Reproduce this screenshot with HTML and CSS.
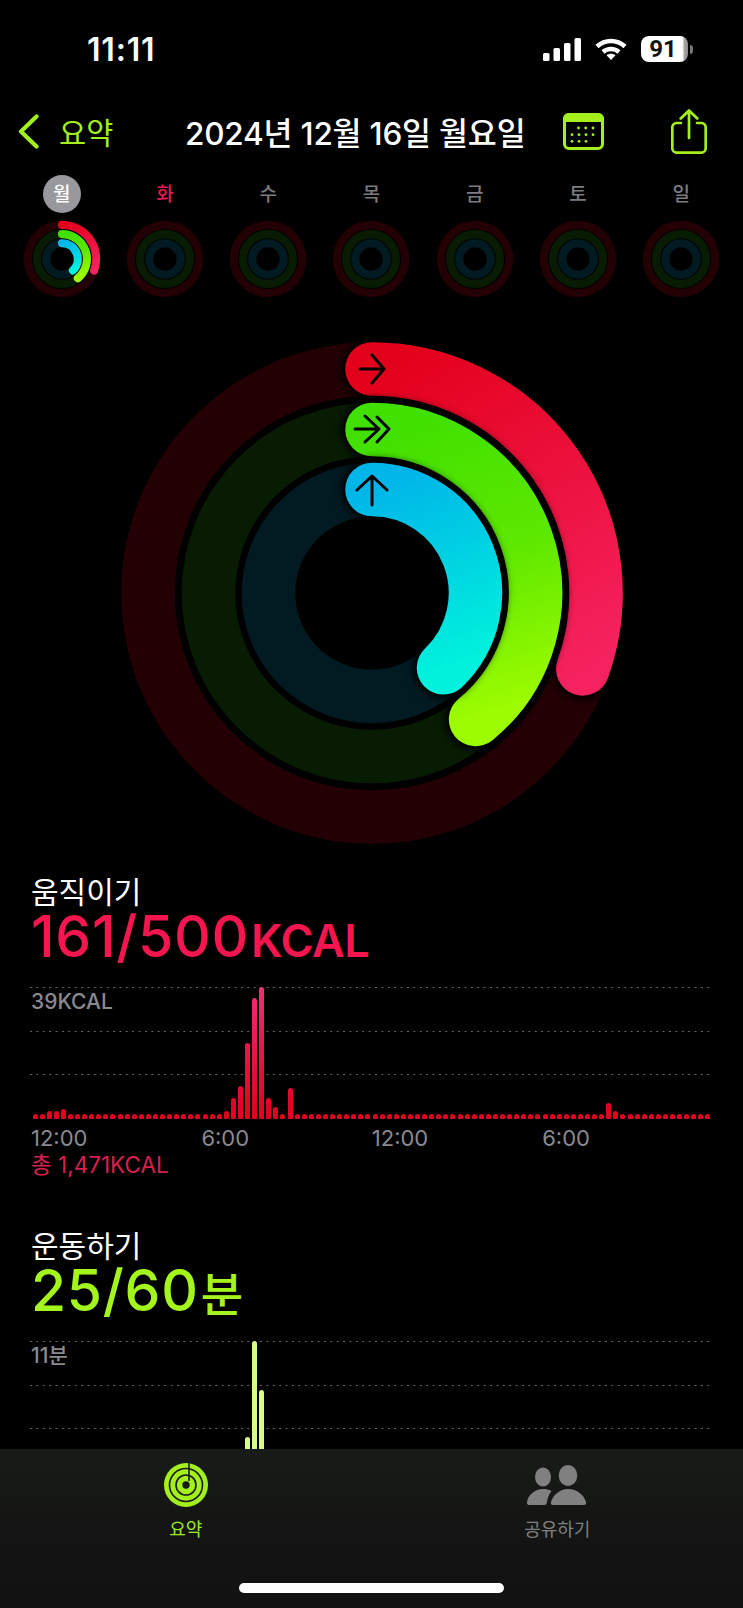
FILE: index.html
```html
<!DOCTYPE html>
<html lang="ko">
<head>
<meta charset="utf-8">
<title>활동 요약</title>
<link rel="stylesheet" href="styles.css">
</head>
<body>
<svg class="defs" width="0" height="0" aria-hidden="true">
  <defs>
    <linearGradient id="gr" gradientUnits="userSpaceOnUse" x1="0" y1="-224" x2="190" y2="90"><stop offset="0" stop-color="#e3001a"/><stop offset="1" stop-color="#f5225f"/></linearGradient>
    <linearGradient id="gg" gradientUnits="userSpaceOnUse" x1="0" y1="-164" x2="90" y2="130"><stop offset="0" stop-color="#40e000"/><stop offset="0.5" stop-color="#5ee800"/><stop offset="1" stop-color="#9dfc00"/></linearGradient>
    <linearGradient id="gc" gradientUnits="userSpaceOnUse" x1="0" y1="-104" x2="70" y2="80"><stop offset="0" stop-color="#00b6e8"/><stop offset="1" stop-color="#00f2dc"/></linearGradient>
    <g id="tracks">
      <circle class="track track-r" r="224"/>
      <circle class="track track-g" r="163.5"/>
      <circle class="track track-c" r="103.5"/>
    </g>
    <g id="arcs">
      <path class="arc-shadow" d="M0 -224A224 224 0 0 1 210.8 75.9"/>
      <path class="arc arc-r" d="M0 -224A224 224 0 0 1 210.8 75.9"/>
      <path class="arc-shadow" d="M0 -163.5A163.5 163.5 0 0 1 103.6 126.5"/>
      <path class="arc arc-g" d="M0 -163.5A163.5 163.5 0 0 1 103.6 126.5"/>
      <path class="arc-shadow" d="M0 -103.5A103.5 103.5 0 0 1 71.5 74.8"/>
      <path class="arc arc-c" d="M0 -103.5A103.5 103.5 0 0 1 71.5 74.8"/>
    </g>
  </defs>
</svg>
<div class="phone">
  <header class="status">
    <span class="time">11:11</span>
    <div class="status-icons">
      <svg class="signal" viewBox="0 0 38 23"><rect x="0" y="15" width="6.5" height="8" rx="1.5"/><rect x="10.5" y="10" width="6.5" height="13" rx="1.5"/><rect x="21" y="5" width="6.5" height="18" rx="1.5"/><rect x="31.5" y="0" width="6.5" height="23" rx="1.5"/></svg>
      <svg class="wifi" viewBox="0 0 32 22"><path d="M2 8.5C10 1 22 1 30 8.5" /><path d="M8 14C12.500 10 19.500 10 24 14"/><path class="wifi-dot" d="M16 22L11.500 17.300C14 15.300 18 15.300 20.500 17.300Z"/></svg>
      <div class="battery"><span>91</span></div>
      <div class="battery-nub"></div>
    </div>
  </header>

  <nav class="nav">
    <div class="back">
      <svg class="chevron" viewBox="0 0 21 35"><path d="M18.500 2.500L3 17.500L18.500 32.500"/></svg>
      <span>요약</span>
    </div>
    <h1 class="nav-title">2024년 12월 16일 월요일</h1>
    <svg class="calendar" viewBox="0 0 41 37">
      <rect class="cal-frame" x="1.500" y="1.500" width="38" height="34" rx="4.500"/>
      <path class="cal-band" d="M6 0H35A6 6 0 0 1 41 6V9H0V6A6 6 0 0 1 6 0Z"/>
      <g class="cal-dots">
        <circle cx="15.500" cy="15" r="1.400"/><circle cx="22.700" cy="15" r="1.400"/><circle cx="30" cy="15" r="1.400"/>
        <circle cx="9" cy="21.700" r="1.400"/><circle cx="16" cy="21.700" r="1.400"/><circle cx="23" cy="21.700" r="1.400"/><circle cx="30" cy="21.700" r="1.400"/>
        <circle cx="9" cy="28.300" r="1.400"/><circle cx="16" cy="28.300" r="1.400"/><circle cx="23" cy="28.300" r="1.400"/>
      </g>
    </svg>
    <svg class="share" viewBox="0 0 36 45">
      <path d="M10 14H5.500A4.500 4.500 0 0 0 1.300 18.500V39A4.500 4.500 0 0 0 5.500 43.700H30.500A4.500 4.500 0 0 0 34.700 39V18.500A4.500 4.500 0 0 0 30.500 14H26"/>
      <path d="M18 29V1.800M9.700 9.500L18 1.500L26.300 9.500"/>
    </svg>
  </nav>

  <div class="week">
    <span class="day day-today">월</span>
    <span class="day day-red">화</span>
    <span class="day">수</span>
    <span class="day">목</span>
    <span class="day">금</span>
    <span class="day">토</span>
    <span class="day">일</span>
    <svg class="mini" viewBox="-256 -256 512 512"><use href="#tracks"/><use href="#arcs"/></svg>
    <svg class="mini" viewBox="-256 -256 512 512"><use href="#tracks"/></svg>
    <svg class="mini" viewBox="-256 -256 512 512"><use href="#tracks"/></svg>
    <svg class="mini" viewBox="-256 -256 512 512"><use href="#tracks"/></svg>
    <svg class="mini" viewBox="-256 -256 512 512"><use href="#tracks"/></svg>
    <svg class="mini" viewBox="-256 -256 512 512"><use href="#tracks"/></svg>
    <svg class="mini" viewBox="-256 -256 512 512"><use href="#tracks"/></svg>
  </div>

  <svg class="big-ring" viewBox="-256 -256 512 512">
    <use href="#tracks"/>
    <use href="#arcs"/>
    <g class="glyph">
      <path d="M-12 -224H12M0 -238L12 -224L0 -210"/>
      <path d="M-17 -164H3M-7 -177L7 -164L-7 -151M5 -176L17 -164L5 -151"/>
      <path d="M0 -88V-117M-15 -103L0 -117L15 -103"/>
    </g>
  </svg>

  <section class="metric metric-move">
    <h2 class="metric-title">움직이기</h2>
    <p class="metric-value">161/500<span class="unit">KCAL</span></p>
    <div class="chart">
      <div class="grid-lines"><i></i><i></i><i></i></div>
      <span class="chart-max">39KCAL</span>
      <div class="bars bars-move">
        <b></b><b></b><b style="height:8px"></b><b style="height:8px"></b><b style="height:10px"></b>
        <b></b><b></b><b></b><b></b><b></b><b></b><b></b><b></b><b></b><b></b><b></b><b></b><b></b><b></b><b></b><b></b><b></b><b></b><b></b><b></b><b></b><b></b>
        <b style="height:8px"></b><b style="height:21px"></b><b style="height:33px"></b><b style="height:76px"></b><b style="height:121px"></b><b style="height:132px"></b><b style="height:21px"></b><b style="height:12px"></b>
        <b></b><b style="height:31px"></b>
        <b></b><b></b><b></b><b></b><b></b><b></b><b></b><b></b><b></b><b></b><b></b><b></b><b></b><b></b><b></b><b></b><b></b><b></b><b></b><b></b><b></b><b></b><b></b><b></b><b></b><b></b><b></b><b></b><b></b><b></b><b></b><b></b><b></b><b></b><b></b><b></b><b></b><b></b><b></b><b></b><b></b><b></b><b></b><b></b>
        <b style="height:16px"></b><b style="height:8px"></b>
        <b></b><b></b><b></b><b></b><b></b><b></b><b></b><b></b><b></b><b></b><b></b><b></b><b></b>
      </div>
    </div>
    <div class="axis"><span>12:00</span><span>6:00</span><span>12:00</span><span>6:00</span></div>
    <p class="total">총 1,471KCAL</p>
  </section>

  <section class="metric metric-exercise">
    <h2 class="metric-title">운동하기</h2>
    <p class="metric-value">25/60<span class="unit unit-ko">분</span></p>
    <div class="chart">
      <div class="grid-lines"><i></i><i></i><i></i></div>
      <span class="chart-max">11분</span>
      <div class="bars bars-exercise">
        <b style="grid-column:31;height:36px"></b><b style="grid-column:32;height:132px"></b><b style="grid-column:33;height:83px"></b>
      </div>
    </div>
  </section>

  <footer class="tabbar">
    <div class="tab tab-active">
      <svg class="tab-rings" viewBox="-22 -22 44 44">
        <circle class="tr-fill" r="22"/>
        <circle class="tr-line" r="16.500"/>
        <circle class="tr-line" r="10"/>
        <circle class="tr-dot" r="3.700"/>
        <path class="tr-line" d="M3 -22V-4"/>
      </svg>
      <span>요약</span>
    </div>
    <div class="tab">
      <svg class="tab-people" viewBox="0 0 60 40">
        <ellipse cx="16" cy="12" rx="8" ry="9.500"/>
        <ellipse cx="41" cy="10.500" rx="9.300" ry="10.500"/>
        <path d="M0 37C1 30 8 24 16 24C19 24 22 24.500 24.500 26C22 29 20.500 33 20 37C19.700 39 19 40 17.500 40H2.500C0.500 40 -0.300 38.500 0 37Z"/>
        <path d="M26 40C24 40 23.500 38.500 24 37C26 30 33 24 41 24C50 24 57 30 59 37C59.500 38.500 59 40 57 40Z"/>
      </svg>
      <span>공유하기</span>
    </div>
    <div class="home-indicator"></div>
  </footer>
</div>
</body>
</html>
```

FILE: styles.css
```css
* { box-sizing: border-box; }

html, body {
  margin: 0;
  padding: 0;
  background: #000;
}

.defs { display: block; height: 0; }

.phone {
  position: relative;
  width: 743px;
  height: 1608px;
  overflow: hidden;
  background: #000;
  color: #fff;
  font-family: Inter, "Noto Sans CJK KR", sans-serif;
}

/* status bar */
.status {
  display: flex;
  align-items: center;
  height: 26px;
  margin-top: 36px;
  padding-left: 87px;
}
.time { font-size: 32px; font-weight: 600; letter-spacing: 0.800px; width: 456px; }
.status-icons { display: flex; align-items: center; }
.signal { width: 38px; height: 23px; fill: #fff; margin-right: 14px; }
.wifi { width: 32px; height: 22px; fill: none; stroke: #fff; stroke-width: 4.500; margin-right: 14px; }
.wifi-dot { fill: #fff; stroke: none; }
.battery {
  display: flex;
  align-items: center;
  justify-content: center;
  width: 47px;
  height: 26px;
  padding-right: 3px;
  border-radius: 8px;
  background: linear-gradient(90deg, #fff 88%, #a8a8a8 92%, #8a8a8a 100%);
  color: #111;
  font-family: Roboto, sans-serif;
  font-size: 24px;
  font-weight: 700;
}
.battery-nub { width: 3px; height: 9px; margin-left: 2px; border-radius: 0 3px 3px 0; background: #777; }

/* nav */
.nav {
  display: grid;
  grid-template-columns: 185px 378px 108px 36px;
  align-items: center;
  height: 45px;
  margin-top: 46px;
}
.back { display: flex; align-items: center; padding-left: 18px; gap: 20px; color: #a3f01c; font-size: 29.500px; }
.back span { padding-bottom: 2px; }
.chevron { width: 21px; height: 35px; fill: none; stroke: #a3f01c; stroke-width: 4.200; stroke-linecap: round; stroke-linejoin: round; }
.nav-title { margin: 0; padding-bottom: 1px; font-size: 31.500px; font-weight: 500; letter-spacing: -0.200px; white-space: nowrap; }
.calendar { width: 41px; height: 37px; }
.cal-frame { fill: none; stroke: #a3f01c; stroke-width: 3; }
.cal-band { fill: #a3f01c; }
.cal-dots { fill: #a3f01c; }
.share { width: 36px; height: 45px; fill: none; stroke: #a3f01c; stroke-width: 2.700; stroke-linecap: round; stroke-linejoin: round; }

/* week strip */
.week {
  display: grid;
  grid-template-columns: repeat(7, 1fr);
  justify-items: center;
  align-items: center;
  row-gap: 7px;
  margin-top: 22px;
  padding: 0 10px;
}
.day { display: flex; align-items: center; justify-content: center; width: 38px; height: 38px; padding-bottom: 3px; border-radius: 50%; color: #7c7c80; font-size: 19px; font-weight: 500; }
.day-today { background: #98989d; color: #fff; }
.day-red { color: #e21a4d; }
.mini { width: 78px; height: 78px; }
.mini .track { stroke-width: 56px; }
.mini .track-r { stroke: #2f0008; }
.mini .track-g { stroke: #0c2a06; }
.mini .track-c { stroke: #05293a; }

/* rings */
.track { fill: none; stroke-width: 53.500px; }
.track-r { stroke: #230004; }
.track-g { stroke: #081c03; }
.track-c { stroke: #021b23; }
.arc { fill: none; stroke-width: 53.500px; stroke-linecap: round; }
.arc-shadow { fill: none; stroke: #000; stroke-width: 60px; stroke-linecap: round; filter: blur(4px); }
.arc-r { stroke: url(#gr); }
.arc-g { stroke: url(#gg); }
.arc-c { stroke: url(#gc); }
.big-ring { display: block; width: 512px; height: 512px; margin: 39px auto 0; }
.glyph { fill: none; stroke: #000; stroke-width: 3; stroke-linecap: round; stroke-linejoin: round; }

/* metric sections */
.metric { padding: 0 32px 0 30px; }
.metric-move { margin-top: 25px; }
.metric-exercise { margin-top: 49px; }
.metric-title { margin: 0; padding: 2px 0 0 1px; height: 32px; font-size: 30px; font-weight: 400; line-height: 32px; }
.metric-value { margin: 0; padding: 2px 0 0 1px; height: 60px; font-size: 57px; font-weight: 500; line-height: 58px; letter-spacing: 0.700px; white-space: nowrap; }
.unit { margin-left: 2px; font-size: 45px; font-weight: 600; letter-spacing: -0.500px; }
.unit-ko { font-size: 46px; font-weight: 500; }
.metric-move .metric-value { color: #f5154f; }
.metric-exercise .metric-value { color: #a3f51c; }

.chart { display: grid; height: 132px; margin-top: 21px; }
.chart > * { grid-area: 1 / 1; }
.grid-lines { display: flex; flex-direction: column; justify-content: space-between; height: 88px; }
.grid-lines i {
  display: block;
  height: 1px;
  background: linear-gradient(90deg, #6a6a6a 2px, transparent 2px) 0 0 / 6.400px 1px repeat-x;
}
.chart-max { align-self: start; margin-top: 3px; padding-left: 1px; color: #8a8a8e; font-size: 21px; font-weight: 500; line-height: 24px; }
.bars { display: grid; grid-template-columns: repeat(96, 1fr); align-items: end; justify-items: center; width: 680px; margin-left: 1.500px; }
.bars b { display: block; width: 5px; height: 5px; border-radius: 2.500px 2.500px 1px 1px; }
.bars-move b {
  background: linear-gradient(0deg, #e2001d 0%, #e6103c 40%, #ee2f7a 100%) bottom / 100% 132px no-repeat;
}
.bars-exercise b { background: #d8fb8e; grid-row: 1; }

.axis { display: grid; grid-template-columns: repeat(4, 170.400px); margin-top: 7px; padding-left: 1px; color: #8a8a8e; font-size: 22px; line-height: 24px; }
.total { margin: 0; padding-left: 1px; height: 29px; color: #d81f50; font-size: 22.500px; line-height: 30px; }

/* tab bar */
.tabbar {
  position: absolute;
  left: 0;
  right: 0;
  bottom: 0;
  display: grid;
  grid-template-columns: 1fr 1fr;
  justify-items: center;
  align-items: start;
  height: 159px;
  padding-top: 14px;
  background: linear-gradient(180deg, #181b17 0%, #131413 60%, #121212 100%);
}
.tab { display: flex; flex-direction: column; align-items: center; color: #808080; font-size: 18px; line-height: 24px; gap: 11px; }
.tab-active { color: #9ee82a; }
.tab-rings { width: 44px; height: 44px; }
.tr-fill { fill: #a3f01c; }
.tr-line { fill: none; stroke: #181b17; stroke-width: 1.600; }
.tr-dot { fill: #181b17; }
.tab-people { width: 60px; height: 40px; margin-top: 2px; margin-bottom: 2px; fill: #808080; }
.home-indicator {
  position: absolute;
  left: 239px;
  bottom: 15px;
  width: 265px;
  height: 10px;
  border-radius: 5px;
  background: #fff;
}
```
